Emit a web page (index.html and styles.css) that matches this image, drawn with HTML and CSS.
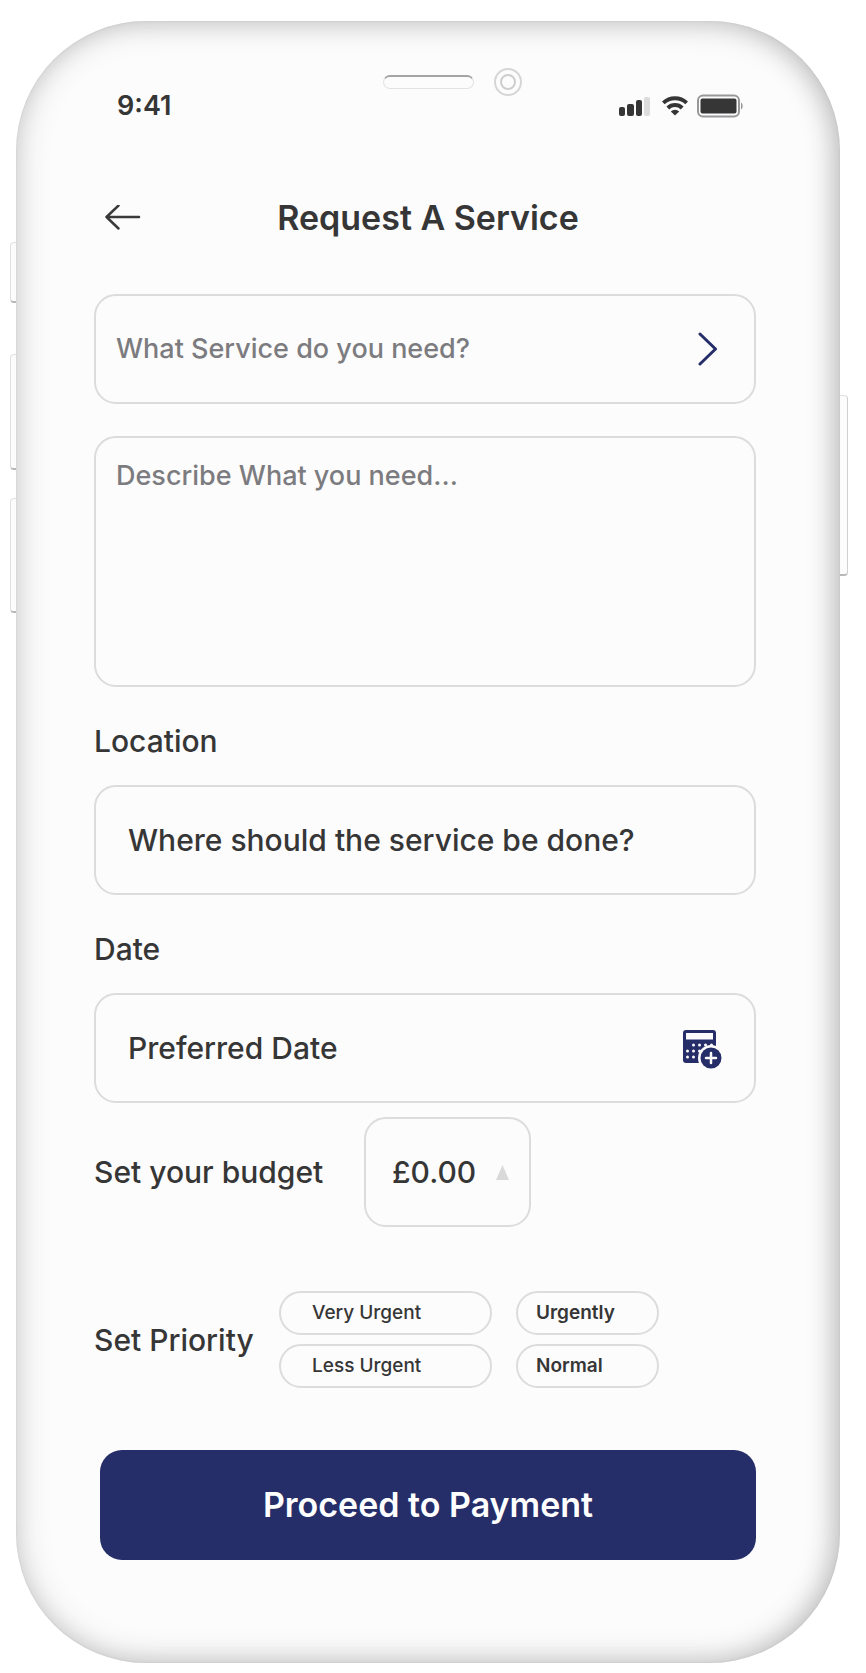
FILE: index.html
```html
<!DOCTYPE html>
<html lang="en">
<head>
    <meta charset="UTF-8">
    <meta name="viewport" content="width=device-width, initial-scale=1.0">
    <title>Request A Service</title>
    <link rel="stylesheet" href="styles.css">
</head>
<body>
    <div class="phone">
        <span class="side-button mute"></span>
        <span class="side-button volume-up"></span>
        <span class="side-button volume-down"></span>
        <span class="side-button power"></span>

        <div class="hardware">
            <span class="speaker"></span>
            <span class="camera"></span>
        </div>

        <div class="status-bar">
            <span class="time">9:41</span>
            <div class="status-icons">
                <svg class="signal" width="32" height="20" viewBox="0 0 32 20">
                    <rect x="0" y="11" width="6" height="9" rx="2" fill="#363636"/>
                    <rect x="8" y="8" width="7" height="12" rx="2" fill="#363636"/>
                    <rect x="17" y="4" width="6" height="16" rx="2" fill="#363636"/>
                    <rect x="25" y="1" width="6" height="19" rx="2" fill="#dcdcdc"/>
                </svg>
                <svg class="wifi" width="26" height="20" viewBox="0 0 26 20">
                    <g fill="none" stroke="#363636" stroke-width="4">
                        <path d="M1.3 6.9a17 17 0 0 1 23.4 0"/>
                        <path d="M5.8 12a10.4 10.4 0 0 1 14.4 0"/>
                    </g>
                    <path d="M13 19.5l-4.2-4.1a6 6 0 0 1 8.4 0z" fill="#363636"/>
                </svg>
                <svg class="battery" width="46" height="24" viewBox="0 0 46 24">
                    <rect x="1" y="1.5" width="41" height="21" rx="5" fill="none" stroke="#98989b" stroke-width="2"/>
                    <rect x="3.5" y="4.5" width="36" height="15" rx="2" fill="#363636"/>
                    <path d="M44 8.5c2.2 1 2.2 6 0 7z" fill="#98989b"/>
                </svg>
            </div>
        </div>

        <header class="header">
            <button type="button" class="back-btn" aria-label="Back">
                <svg width="36" height="26" viewBox="0 0 36 26" fill="none" stroke="#3a3a3a" stroke-width="2.5" stroke-linecap="round" stroke-linejoin="round">
                    <path d="M34 12H1.5M13.5 0.500L1.5 12l12 11.5"/>
                </svg>
            </button>
            <h1>Request A Service</h1>
        </header>

        <form id="requestForm">
            <div class="field">
                <select id="service" class="muted" aria-label="Service">
                    <option value="">What Service do you need?</option>
                </select>
                <svg class="chevron" width="20" height="34" viewBox="0 0 20 34" fill="none" stroke="#262e6a" stroke-width="3" stroke-linecap="round" stroke-linejoin="round">
                    <path d="M2 2l15.5 15L2 32"/>
                </svg>
            </div>

            <textarea id="description" class="muted" placeholder="Describe What you need..." aria-label="Description"></textarea>

            <label for="location" class="field-label">Location</label>
            <div class="field indent">
                <input type="text" id="location" placeholder="Where should the service be done?">
            </div>

            <label for="date" class="field-label">Date</label>
            <div class="field indent">
                <input type="text" id="date" placeholder="Preferred Date">
                <button type="button" class="date-btn" aria-label="Pick a date">
                    <svg width="39" height="41" viewBox="0 0 39 41">
                        <rect x="0" y="2" width="33" height="33" rx="3" fill="#262e6a"/>
                        <rect x="3" y="5" width="27" height="6.5" fill="#fcfcfc"/>
                        <g fill="#fcfcfc">
                            <circle cx="10.5" cy="17" r="1.5"/>
                            <circle cx="16.5" cy="17" r="1.5"/>
                            <circle cx="22.5" cy="17" r="1.5"/>
                            <circle cx="28.5" cy="17" r="1.5"/>
                            <circle cx="4.5" cy="23" r="1.5"/>
                            <circle cx="10.5" cy="23" r="1.5"/>
                            <circle cx="16.5" cy="23" r="1.5"/>
                            <circle cx="4.5" cy="29" r="1.5"/>
                            <circle cx="10.5" cy="29" r="1.5"/>
                            <circle cx="28" cy="30" r="13"/>
                        </g>
                        <circle cx="28" cy="30" r="10.5" fill="#262e6a"/>
                        <path d="M28 25v10M23 30h10" stroke="#fcfcfc" stroke-width="2.5" stroke-linecap="round"/>
                    </svg>
                </button>
            </div>

            <div class="row budget-row">
                <label for="budget">Set your budget</label>
                <div class="field budget">
                    <input type="text" id="budget" value="£0.00">
                    <button type="button" class="step-btn" aria-label="Increase budget">
                        <svg width="13" height="15" viewBox="0 0 13 15">
                            <path d="M6.5 0L13 15H0z" fill="#d9d9d9"/>
                        </svg>
                    </button>
                </div>
            </div>

            <div class="row priority-row">
                <span id="priorityLabel" class="row-label">Set Priority</span>
                <div class="priority-options" role="radiogroup" aria-labelledby="priorityLabel">
                    <label class="pill"><input type="radio" name="priority" value="very-urgent">Very Urgent</label>
                    <label class="pill strong"><input type="radio" name="priority" value="urgently">Urgently</label>
                    <label class="pill"><input type="radio" name="priority" value="less-urgent">Less Urgent</label>
                    <label class="pill strong"><input type="radio" name="priority" value="normal">Normal</label>
                </div>
            </div>

            <button type="submit" class="submit-btn">Proceed to Payment</button>
        </form>
    </div>
</body>
</html>
```

FILE: styles.css
```css
:root {
    --primary-color: #262e6a;
    --screen-bg: #fcfcfc;
    --text-dark: #363636;
    --text-muted: #7c7c80;
    --field-border: #dcdcdc;
}

* {
    box-sizing: border-box;
}

body {
    font-family: Inter, sans-serif;
    font-size: 30px;
    font-weight: 500;
    line-height: 36px;
    background: #ffffff;
    color: var(--text-dark);
    margin: 0;
    padding: 21px 26px 8px 16px;
}

/* Phone frame */
.phone {
    position: relative;
    max-width: 824px;
    margin: 0 auto;
    padding: 47px 84px 103px 78px;
    background: var(--screen-bg);
    border-radius: 130px;
    box-shadow:
        inset 0 0 2px rgba(0, 0, 0, 0.1),
        inset 0 0 36px rgba(0, 0, 0, 0.16),
        inset -6px 0 24px rgba(0, 0, 0, 0.16);
}

.side-button {
    position: absolute;
    left: -6px;
    width: 6px;
    border: 1px solid #e0e0e0;
    border-right: none;
    border-bottom: 2px solid #b8b8b8;
    border-radius: 4px 0 0 4px;
    background: #fcfcfc;
}

.mute {
    top: 221px;
    height: 61px;
}

.volume-up {
    top: 333px;
    height: 116px;
}

.volume-down {
    top: 477px;
    height: 115px;
}

.power {
    top: 374px;
    left: auto;
    right: -8px;
    width: 8px;
    height: 181px;
    border-left: none;
    border-right: 1px solid #d0d0d0;
    border-radius: 0 4px 4px 0;
}

.hardware {
    display: grid;
    grid-template-columns: 1fr auto 1fr;
    align-items: center;
    padding-left: 6px;
}

.speaker {
    grid-column: 2;
    width: 91px;
    height: 14px;
    border: 1px solid #e2e2e2;
    border-top: 2px solid #a4a4a4;
    border-radius: 7px;
}

.camera {
    width: 28px;
    height: 28px;
    margin-left: 20px;
    border: 2px solid #d6d6d6;
    border-radius: 50%;
    padding: 4px;
}

.camera::before {
    content: "";
    display: block;
    height: 12px;
    border: 2px solid #cecece;
    border-radius: 50%;
}

.status-bar {
    display: flex;
    justify-content: space-between;
    align-items: center;
    height: 20px;
    padding: 0 13px 0 23px;
}

.time {
    font-size: 27px;
    font-weight: 600;
}

.status-icons {
    display: flex;
    align-items: center;
}

.wifi {
    margin: 0 9px 0 11px;
}

/* Header */
.header {
    display: grid;
    grid-template-columns: 1fr auto 1fr;
    align-items: center;
    margin: 82px 0 56px;
    padding-left: 6px;
}

h1 {
    margin: 0;
    font-size: 34px;
    font-weight: 600;
    line-height: 40px;
}

button {
    font: inherit;
    cursor: pointer;
}

.back-btn,
.date-btn,
.step-btn {
    display: flex;
    flex-shrink: 0;
    padding: 0;
    border: none;
    background: none;
}

.back-btn {
    justify-self: start;
    margin-left: 5px;
}

/* Form */
.field,
textarea {
    border: 2px solid var(--field-border);
    border-radius: 22px;
    background: var(--screen-bg);
}

.field {
    display: flex;
    align-items: center;
    height: 110px;
    padding: 0 32px 0 20px;
}

.field.indent {
    padding-left: 32px;
}

input,
select,
textarea {
    font: inherit;
    color: var(--text-dark);
    outline: none;
}

.field input,
.field select {
    flex: 1;
    min-width: 0;
    padding: 0;
    border: none;
    background: none;
    appearance: none;
}

::placeholder {
    color: inherit;
    opacity: 1;
}

.field .muted,
textarea {
    font-size: 27px;
    color: var(--text-muted);
}

.chevron {
    margin-right: 4px;
}

textarea {
    display: block;
    width: 100%;
    height: 251px;
    margin-top: 32px;
    padding: 20px;
    resize: none;
}

.field-label {
    display: block;
    margin: 36px 0 26px;
}

.row {
    display: flex;
    align-items: center;
}

.budget-row {
    margin-top: 14px;
}

.budget-row > label {
    width: 270px;
}

.budget {
    width: 167px;
    padding: 0 20px 0 26px;
}

.priority-row {
    margin-top: 64px;
}

.row-label {
    width: 185px;
}

.priority-options {
    display: grid;
    grid-template-columns: 213px 143px;
    gap: 9px 24px;
}

.pill {
    padding: 2px 31px;
    border: 2px solid var(--field-border);
    border-radius: 22px;
    font-size: 19px;
    cursor: pointer;
}

.pill.strong {
    padding: 2px 18px;
    font-weight: 600;
}

.pill input {
    position: absolute;
    opacity: 0;
}

.pill:has(input:checked) {
    border-color: var(--primary-color);
}

.submit-btn {
    display: block;
    width: calc(100% - 6px);
    height: 110px;
    margin: 62px 0 0 6px;
    border: none;
    border-radius: 22px;
    background: var(--primary-color);
    color: #ffffff;
    font-size: 34px;
    font-weight: 600;
}
```
